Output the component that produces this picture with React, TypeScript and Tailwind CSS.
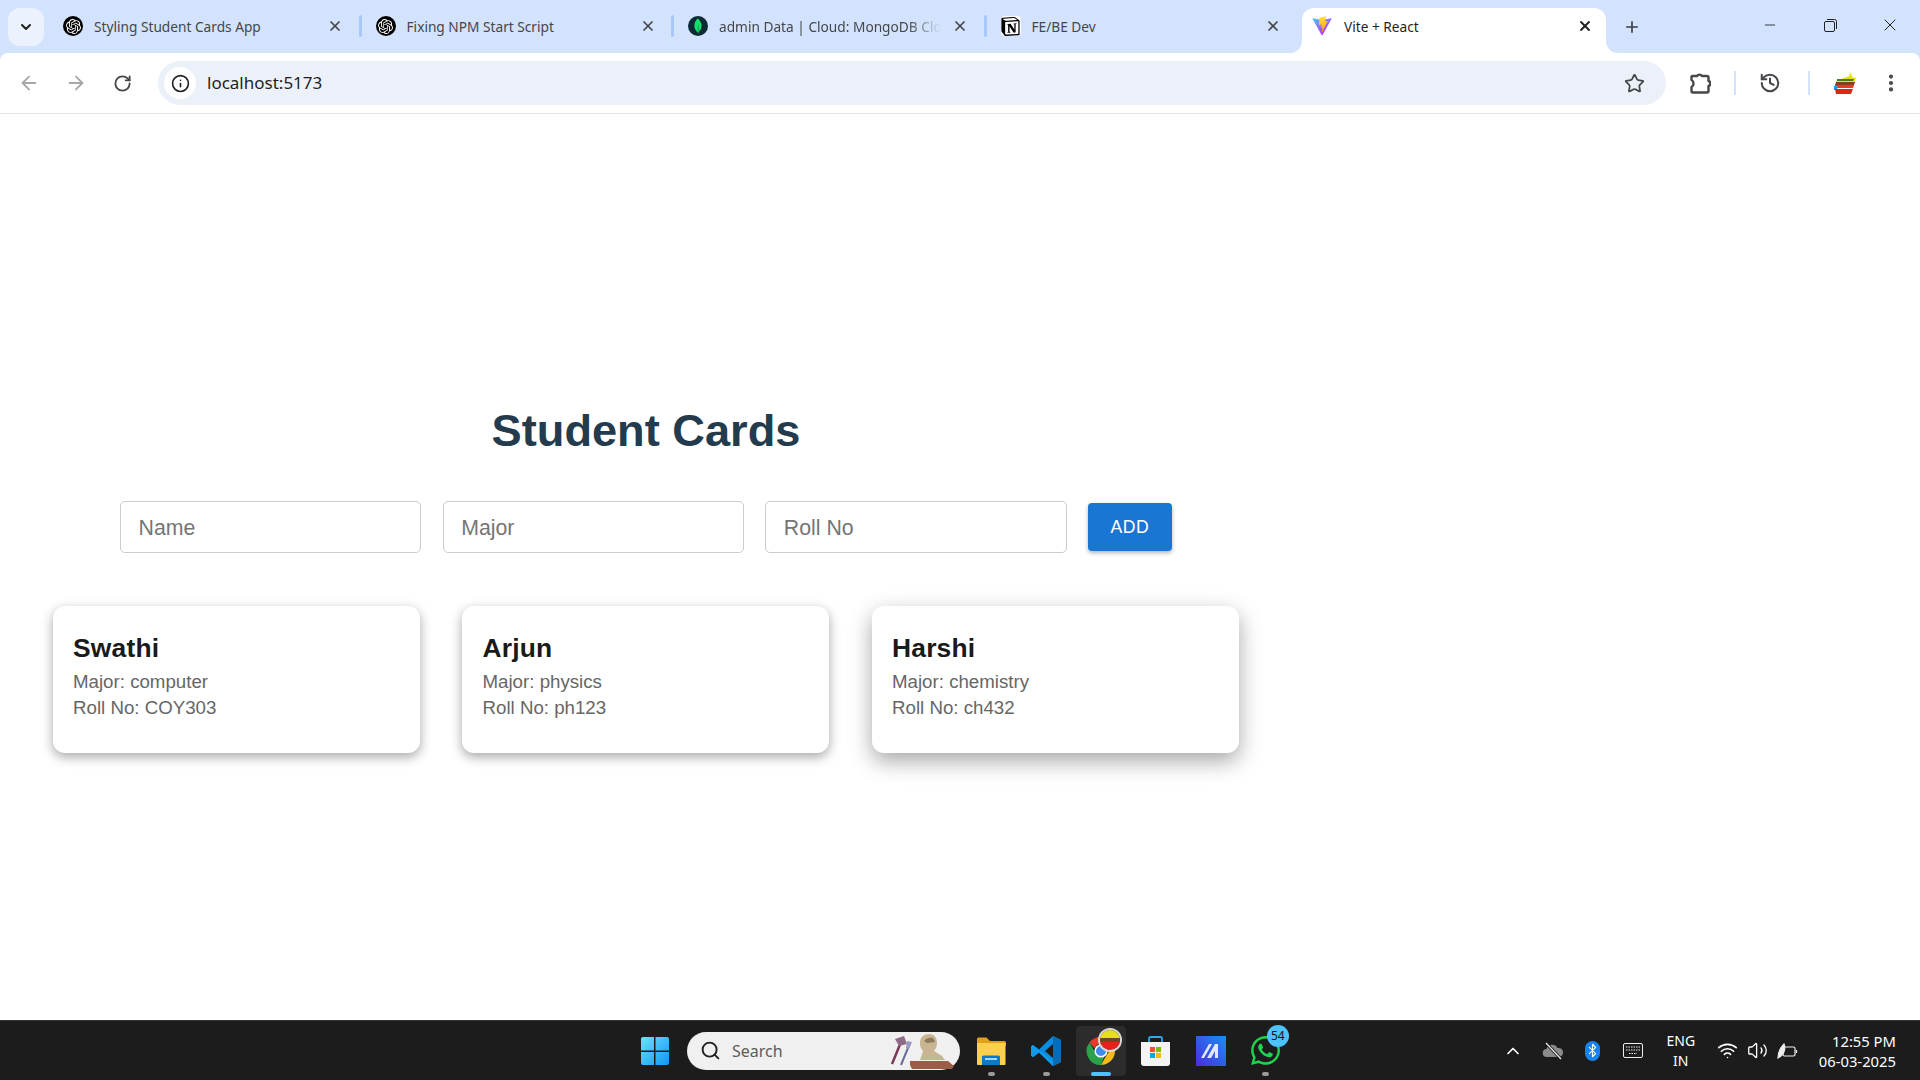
import React from "react";
import { SiOpenai, SiMongodb, SiNotion } from "react-icons/si";
import { FaWhatsapp } from "react-icons/fa";
import {
    ArrowLeft,
    ArrowRight,
    RotateCw,
    Info,
    Star,
    History,
    EllipsisVertical,
    X,
    Plus,
    Minus,
    ChevronDown,
    ChevronUp,
    Search,
    Bluetooth,
    Wifi,
    Volume2,
} from "lucide-react";

const ViteIcon = () => (
    <svg width="20" height="20" viewBox="0 0 410 404">
        <defs>
            <linearGradient id="vite-a" x1="6" y1="33" x2="235" y2="344" gradientUnits="userSpaceOnUse">
                <stop stopColor="#41D1FF" />
                <stop offset="1" stopColor="#BD34FE" />
            </linearGradient>
            <linearGradient id="vite-b" x1="194" y1="8" x2="236" y2="292" gradientUnits="userSpaceOnUse">
                <stop stopColor="#FFEA83" />
                <stop offset="0.08" stopColor="#FFDD35" />
                <stop offset="1" stopColor="#FFA800" />
            </linearGradient>
        </defs>
        <path
            d="M399 60 216 388c-4 7-14 7-18 0L11 60c-4-7 2-16 10-15l183 33h4l179-33c8-1 15 8 12 15Z"
            fill="url(#vite-a)"
        />
        <path
            d="M292 1 156 28c-2 0-4 2-4 5l-9 141c0 3 3 6 6 5l38-9c4-1 7 2 6 6l-11 55c-1 4 3 7 6 6l24-7c4-1 7 2 6 6l-18 87c-1 5 6 8 9 3l2-3 107-214c2-4-1-8-5-7l-39 8c-4 1-7-3-6-6l25-89c1-4-2-8-6-7Z"
            fill="url(#vite-b)"
        />
    </svg>
);

const OpenAiFavicon = () => (
    <span className="flex h-5 w-5 items-center justify-center rounded-full bg-black">
        <SiOpenai className="text-white" size={15} />
    </span>
);

const MongoFavicon = () => (
    <span className="flex h-5 w-5 items-center justify-center rounded-full bg-[#0b2a33]">
        <SiMongodb className="text-[#13e06a]" size={16} />
    </span>
);

const NotionFavicon = () => (
    <span className="flex h-5 w-5 items-center justify-center rounded-sm bg-white">
        <SiNotion className="text-black" size={19} />
    </span>
);

const tabs = [
    { title: "Styling Student Cards App", icon: <OpenAiFavicon /> },
    { title: "Fixing NPM Start Script", icon: <OpenAiFavicon /> },
    { title: "admin Data | Cloud: MongoDB Cloud", icon: <MongoFavicon />, fade: true },
    { title: "FE/BE Dev", icon: <NotionFavicon /> },
];

function Tab({ title, icon, fade }: { title: string; icon: React.ReactNode; fade?: boolean }) {
    return (
        <div className="mt-2 flex h-[45px] w-[304px] items-start pl-[11px] pr-3 pt-2">
            {icon}
            <span
                className={
                    fade
                        ? "ml-[11px] w-[222px] overflow-hidden whitespace-nowrap pt-px text-[13.700px] leading-5 text-[#45474a] [mask-image:linear-gradient(to_right,black_85%,transparent)]"
                        : "ml-[11px] w-[222px] overflow-hidden whitespace-nowrap pt-px text-[13.700px] leading-5 text-[#45474a]"
                }
            >
                {title}
            </span>
            <span className="ml-auto flex h-5 w-[18px] items-center justify-center">
                <X size={16} strokeWidth={2.6} className="text-[#45474a]" />
            </span>
        </div>
    );
}

function TabStrip() {
    return (
        <div className="flex h-[53px] bg-[#d3e3fd] pl-2">
            <div className="mt-2 flex h-[38px] w-9 items-center justify-center rounded-xl bg-[#ecf2fd]">
                <ChevronDown size={16} strokeWidth={3} className="text-[#1f1f1f]" />
            </div>
            <div className="ml-2 mr-0 flex">
                {tabs.map((tab, i) => (
                    <React.Fragment key={tab.title}>
                        <Tab title={tab.title} icon={tab.icon} fade={tab.fade} />
                        <div className="flex w-[8.500px] justify-center pt-[15px]">
                            {i < 3 && <div className="h-[22px] w-[3px] rounded-sm bg-[#a8c7fa]" />}
                        </div>
                    </React.Fragment>
                ))}
            </div>
            <div className="relative mt-2 flex h-[45px] w-[304px] items-start rounded-t-xl bg-white pl-[10px] pr-3 pt-2">
                <div className="absolute -left-3 bottom-0 h-3 w-3 bg-white">
                    <div className="h-full w-full rounded-br-xl bg-[#d3e3fd]" />
                </div>
                <div className="absolute -right-3 bottom-0 h-3 w-3 bg-white">
                    <div className="h-full w-full rounded-bl-xl bg-[#d3e3fd]" />
                </div>
                <ViteIcon />
                <span className="ml-3 pt-px text-[13.700px] leading-5 text-[#1f1f1f]">Vite + React</span>
                <span className="ml-auto flex h-5 w-[18px] items-center justify-center">
                    <X size={16} strokeWidth={2.8} className="text-[#1f1f1f]" />
                </span>
            </div>
            <div className="flex h-[53px] w-[52px] items-center justify-center">
                <Plus size={18} strokeWidth={2.2} className="text-[#3c3f43]" />
            </div>
            <div className="ml-auto flex">
                <div className="flex h-[50px] w-[60px] items-center justify-center">
                    <Minus size={16} strokeWidth={1.3} className="text-[#222]" />
                </div>
                <div className="flex h-[50px] w-[60px] items-center justify-center">
                    <svg width="15" height="15" viewBox="0 0 15 15" fill="none" stroke="#222" strokeWidth="1">
                        <rect x="1.5" y="3.5" width="10" height="10" rx="1.5" />
                        <path d="M4 1.5h7.5a2 2 0 0 1 2 2V11" />
                    </svg>
                </div>
                <div className="flex h-[50px] w-[60px] items-center justify-center">
                    <X size={20} strokeWidth={1.2} className="text-[#222]" />
                </div>
            </div>
        </div>
    );
}

function ToolbarButton({ children }: { children: React.ReactNode }) {
    return <div className="flex h-[60px] w-[47px] items-center justify-center">{children}</div>;
}

function Toolbar() {
    return (
        <div className="bg-[#d3e3fd]">
            <div className="flex h-[61px] items-center rounded-t-lg border-b border-[#e3e3e3] bg-white pl-[5px]">
                <ToolbarButton>
                    <ArrowLeft size={22} strokeWidth={2} className="text-[#a6a7a9]" />
                </ToolbarButton>
                <ToolbarButton>
                    <ArrowRight size={22} strokeWidth={2} className="text-[#a6a7a9]" />
                </ToolbarButton>
                <ToolbarButton>
                    <RotateCw size={19} strokeWidth={2.3} className="text-[#45474a]" />
                </ToolbarButton>
                <div className="ml-[12px] flex h-11 w-[1508px] items-center rounded-full bg-[#ecf1f9] pl-[6px] pr-[21px]">
                    <div className="flex h-8 w-8 items-center justify-center rounded-full bg-white">
                        <Info size={19} strokeWidth={2} className="text-[#1f1f1f]" />
                    </div>
                    <span className="ml-[11px] text-[17px] text-[#1f1f1f]">localhost:5173</span>
                    <Star size={21} strokeWidth={2} className="ml-auto text-[#45474a]" />
                </div>
                <div className="ml-[14px] flex w-10 justify-center">
                    <svg width="22" height="24" viewBox="0 0 22 24" fill="none" stroke="#45474a" strokeWidth="2.4" strokeLinejoin="round">
                        <path d="M3 5h5a3 3 0 0 1 5 0h5a1.5 1.5 0 0 1 1.5 1.5V10a2.6 2.6 0 0 1 0 5v5a1.5 1.5 0 0 1-1.5 1.5H4A1.5 1.5 0 0 1 2.500 20v-4a4 4 0 0 0 0-7V6a1 1 0 0 1 .5-1Z" />
                    </svg>
                </div>
                <div className="ml-[14px] h-[24px] w-[2px] bg-[#d3e3fd]" />
                <div className="ml-[14px] flex w-10 justify-center">
                    <History size={22} strokeWidth={2.2} className="text-[#45474a]" />
                </div>
                <div className="ml-[18px] h-[24px] w-[2px] bg-[#d3e3fd]" />
                <div className="ml-[15px] flex w-10 justify-center">
                    <svg width="24" height="24" viewBox="0 0 24 24">
                        <path d="M3 10 16 5l2-4 1 5 4 1-2 6H3Z" fill="#e8e017" />
                        <path d="M4 8h17l-1 2H4Z" fill="#4d7a2a" />
                        <path d="M3 11h19l-1 3H2Z" fill="#8a3f1c" />
                        <path d="M2 14h19l-1 3H2Z" fill="#ec3a22" />
                        <path d="M1 15h4l-1 4H1Z" fill="#2f8fe0" />
                        <path d="M2 18h18l-2 5H3Z" fill="#e2231a" />
                    </svg>
                </div>
                <div className="ml-[6px] flex w-10 justify-center">
                    <EllipsisVertical size={22} strokeWidth={2.6} className="text-[#45474a]" />
                </div>
            </div>
        </div>
    );
}

function FormInput({ placeholder }: { placeholder: string }) {
    return (
        <input
            placeholder={placeholder}
            className="h-[52px] w-[301.300px] rounded-[5px] border border-[#cccccc] bg-white px-[17.500px] pt-0.5 text-[21.300px] outline-none placeholder:text-[#757575]"
        />
    );
}

const students = [
    { name: "Swathi", major: "computer", roll: "COY303", shadow: "shadow-[0_4px_12px_rgba(0,0,0,0.35)]" },
    { name: "Arjun", major: "physics", roll: "ph123", shadow: "shadow-[0_4px_12px_rgba(0,0,0,0.35)]" },
    { name: "Harshi", major: "chemistry", roll: "ch432", shadow: "shadow-[0_8px_22px_rgba(0,0,0,0.35)]" },
];

function StudentCard({ name, major, roll, shadow }: { name: string; major: string; roll: string; shadow: string }) {
    return (
        <div className={`w-[367px] rounded-xl bg-white px-[20.500px] pb-8 pt-5 ${shadow}`}>
            <h3 className="pt-px text-[26.400px] font-bold leading-[42px] tracking-[0.2px] text-[#1a1a1a]">{name}</h3>
            <p className="text-[18.700px] leading-[26px] text-[#666666]">Major: {major}</p>
            <p className="text-[18.700px] leading-[26px] text-[#666666]">Roll No: {roll}</p>
        </div>
    );
}

function Page() {
    return (
        <main className="flex-1 bg-white font-['Liberation_Sans',Arial,sans-serif]">
            <div className="flex w-[1292px] flex-col items-center pt-[290px]">
                <h1 className="text-[45.200px] font-bold leading-[54px] text-[#243a4d]">Student Cards</h1>
                <div className="mt-[43px] flex items-center gap-[21.300px]">
                    <FormInput placeholder="Name" />
                    <FormInput placeholder="Major" />
                    <FormInput placeholder="Roll No" />
                    <button className="h-12 w-[84px] rounded bg-[#1976d2] text-[17.600px] tracking-[0.5px] text-white shadow-[0_2px_4px_rgba(0,0,0,0.3)]">
                        ADD
                    </button>
                </div>
                <div className="-ml-px mt-[53px] flex gap-[42.500px]">
                    {students.map((s) => (
                        <StudentCard key={s.name} {...s} />
                    ))}
                </div>
            </div>
        </main>
    );
}

const WindowsLogo = () => (
    <svg width="30" height="30" viewBox="0 0 30 30">
        <defs>
            <linearGradient id="win" x1="0" y1="0" x2="1" y2="1">
                <stop stopColor="#6fe0fb" />
                <stop offset="1" stopColor="#0f97f2" />
            </linearGradient>
        </defs>
        <path d="M1 3a2 2 0 0 1 2-2h11v13.500H1ZM15.500 1H27a2 2 0 0 1 2 2v11.500H15.500ZM1 16h13v13H3a2 2 0 0 1-2-2ZM15.500 16H29v11a2 2 0 0 1-2 2H15.500Z" fill="url(#win)" />
    </svg>
);

const SearchArt = () => (
    <svg width="66" height="36" viewBox="0 0 62 36">
        <path d="M0 31 9 9" stroke="#7a3a58" strokeWidth="2.5" />
        <path d="M3 6l9-3 3 8-8 2Z" fill="#8e6a86" />
        <path d="M9 32 18 10" stroke="#6a6a9a" strokeWidth="2" />
        <path d="M15 8l5 1-3 7-3-1Z" fill="#9a9ac0" />
        <path d="M28 10c0-6 4-9 9-9 6 0 8 4 8 9 0 3-1 6-3 8l8 5 3 4H28l3-9c-2-2-3-5-3-8Z" fill="#c9b592" />
        <path d="M32 8c2-3 6-4 9-3l2 4-8 1Z" fill="#8d7a5c" />
        <path d="M18 28h38l6 5-2 3H20l-2-4Z" fill="#9c5c46" />
    </svg>
);

const FolderIcon = () => (
    <svg width="30" height="30" viewBox="0 0 30 30">
        <path d="M1 3a1.500 1.500 0 0 1 1.500-1.500h8L14 5h14.500A1.500 1.500 0 0 1 30 6.500V10H1Z" fill="#e0a21c" />
        <path d="M1 7h28.500v21a1 1 0 0 1-1 1H2a1 1 0 0 1-1-1Z" fill="#fbd04f" />
        <path d="M6 29V21a1.500 1.500 0 0 1 1.500-1.500h15A1.500 1.500 0 0 1 24 21v8Z" fill="#0c78c8" />
        <rect x="9" y="22" width="12" height="2" fill="#9fd8fa" />
    </svg>
);

const VsCodeIcon = () => (
    <svg width="32" height="32" viewBox="0 0 32 32">
        <path d="M23 1 31 5v22l-8 4-14-13.500L3 22l-2-1.500v-9L3 10l6 4.500Zm0 8-8 7 8 7Z" fill="#0c8ce0" />
        <path d="M23 1 31 5v22l-8 4Z" fill="#0a6cb5" />
        <path d="M1 11.500 3 10l20 16v5L9 17.500 3 22l-2-1.500Z" fill="#1199ec" />
    </svg>
);

const ChromeIcon = () => (
    <svg width="32" height="32" viewBox="0 0 32 32">
        <path d="M16 2a14 14 0 0 1 12.100 7H16a7 7 0 0 0-6.500 4.300L4.500 7.500A14 14 0 0 1 16 2Z" fill="#e33b2e" />
        <path d="M28.100 9A14 14 0 0 1 16 30l6-10.500A7 7 0 0 0 22 9Z" fill="#f9bc15" />
        <path d="M16 30A14 14 0 0 1 4.500 7.500l6 10.500a7 7 0 0 0 9 3Z" fill="#2aa24a" />
        <circle cx="16" cy="16" r="5.800" fill="#3f8bf0" stroke="#fff" strokeWidth="1.500" />
    </svg>
);

const StoreIcon = () => (
    <svg width="29" height="30" viewBox="0 0 29 30">
        <path d="M8 6V2.500A1.500 1.500 0 0 1 9.500 1h10A1.500 1.500 0 0 1 21 2.500V6" fill="none" stroke="#2aa8e8" strokeWidth="1.800" />
        <path d="M0 6h29v21a3 3 0 0 1-3 3H3a3 3 0 0 1-3-3Z" fill="#f4f4f4" />
        <rect x="9" y="11" width="5" height="5" fill="#f35325" />
        <rect x="15" y="11" width="5" height="5" fill="#81bc06" />
        <rect x="9" y="17" width="5" height="5" fill="#05a6f0" />
        <rect x="15" y="17" width="5" height="5" fill="#ffba08" />
    </svg>
);

const MarkerAppIcon = () => (
    <svg width="30" height="30" viewBox="0 0 30 30">
        <defs>
            <linearGradient id="mk" x1="0" y1="1" x2="1" y2="0">
                <stop stopColor="#4a2ce0" />
                <stop offset="1" stopColor="#1a8ff0" />
            </linearGradient>
        </defs>
        <rect width="30" height="30" fill="url(#mk)" />
        <path d="M5 22 13 8h3L8 22ZM11 22 19 8h3v14h-3v-7l-4 7Z" fill="#dfe8ff" />
    </svg>
);

function TaskbarApp({ children, running, active }: { children: React.ReactNode; running?: boolean; active?: boolean }) {
    return (
        <div className="relative flex h-[50px] w-[54.800px] items-center justify-center">
            {active && <div className="absolute inset-y-0 left-[2.500px] w-[50px] rounded bg-[#2c2c2c]" />}
            <div className="relative flex">{children}</div>
            {running && !active && <div className="absolute bottom-0 h-[4px] w-[7px] rounded-full bg-[#9a9a9a]" />}
            {active && <div className="absolute bottom-0 h-[4px] w-[20px] rounded-full bg-[#4cc2ff]" />}
        </div>
    );
}

function TrayBox({ children, className }: { children: React.ReactNode; className: string }) {
    return <div className={`flex items-center justify-center ${className}`}>{children}</div>;
}

function Taskbar() {
    return (
        <footer className="flex h-[60px] items-center border-t border-[#333333] bg-[#1c1c1c] pl-[640px] font-['Noto_Sans',sans-serif] text-white">
            <WindowsLogo />
            <div className="ml-[17px] mr-1 flex h-[38px] w-[273px] items-center rounded-full bg-[#f0f0f0] pl-[13px] pr-1">
                <Search size={21} strokeWidth={2.2} className="text-[#222]" />
                <span className="ml-[11px] text-[16px] text-[#5c5c5c]">Search</span>
                <div className="ml-auto">
                    <SearchArt />
                </div>
            </div>
            <TaskbarApp running>
                <FolderIcon />
            </TaskbarApp>
            <TaskbarApp running>
                <VsCodeIcon />
            </TaskbarApp>
            <TaskbarApp active>
                <ChromeIcon />
                <span className="absolute -right-[5px] -top-[7px] flex h-6 w-6 flex-col overflow-hidden rounded-full border-2 border-[#d8d8d8]">
                    <span className="h-2 bg-[#e8e017]" />
                    <span className="h-1 bg-[#6a4a20]" />
                    <span className="flex-1 bg-[#e2231a]" />
                </span>
            </TaskbarApp>
            <TaskbarApp>
                <StoreIcon />
            </TaskbarApp>
            <TaskbarApp>
                <MarkerAppIcon />
            </TaskbarApp>
            <TaskbarApp running>
                <FaWhatsapp size={33} className="text-[#1fd34f]" />
                <span className="absolute -right-[7px] -top-[9px] flex h-[22px] w-[22px] items-center justify-center rounded-full bg-[#4cc2ff] text-[12px] text-[#111]">
                    54
                </span>
            </TaskbarApp>

            <div className="ml-[200px] flex flex-1 items-center">
                <TrayBox className="w-10">
                    <ChevronUp size={20} strokeWidth={2} />
                </TrayBox>
                <TrayBox className="w-10">
                    <svg width="22" height="18" viewBox="0 0 22 18">
                        <path d="M5 15a4 4 0 0 1-.5-8 6 6 0 0 1 11-1 4.500 4.500 0 0 1 2 9Z" fill="#8a8a8a" />
                        <path d="M4 1l15 16" stroke="#1c1c1c" strokeWidth="3" />
                        <path d="M4 1l15 16" stroke="#e8e8e8" strokeWidth="1.300" />
                    </svg>
                </TrayBox>
                <TrayBox className="w-10">
                    <span className="flex h-[20px] w-[15px] items-center justify-center rounded-full bg-[#1684f0]">
                        <Bluetooth size={15} strokeWidth={1.800} />
                    </span>
                </TrayBox>
                <TrayBox className="w-10">
                    <svg width="20" height="15" viewBox="0 0 20 15" fill="none" stroke="#eee">
                        <rect x="0.500" y="0.500" width="19" height="14" rx="1.500" />
                        <path d="M3 4h14M3 7h14M6 10.500h8" strokeDasharray="1.500 1" />
                    </svg>
                </TrayBox>
                <div className="w-14 text-center text-[14px] leading-[20px]">
                    <div>ENG</div>
                    <div>IN</div>
                </div>
                <TrayBox className="ml-1 w-[30px]">
                    <Wifi size={21} strokeWidth={1.900} />
                </TrayBox>
                <TrayBox className="w-[30px]">
                    <Volume2 size={21} strokeWidth={1.500} />
                </TrayBox>
                <TrayBox className="w-[30px]">
                    <svg width="21" height="16" viewBox="0 0 21 16" fill="none" stroke="#eee" strokeWidth="1.200">
                        <path d="M1 15c0-6 2-10 6-14 2 5 0 11-6 14Z" fill="#eee" />
                        <rect x="6" y="4" width="12" height="9" rx="1.500" />
                        <path d="M19.500 7v3" />
                    </svg>
                </TrayBox>
                <div className="flex-1 pr-6 text-right text-[14.800px] leading-[20px]">
                    <div>12:55 PM</div>
                    <div>06-03-2025</div>
                </div>
            </div>
        </footer>
    );
}

export default function App() {
    return (
        <div className="flex h-screen flex-col overflow-hidden bg-white font-['Noto_Sans',sans-serif]">
            <TabStrip />
            <Toolbar />
            <Page />
            <Taskbar />
        </div>
    );
}
